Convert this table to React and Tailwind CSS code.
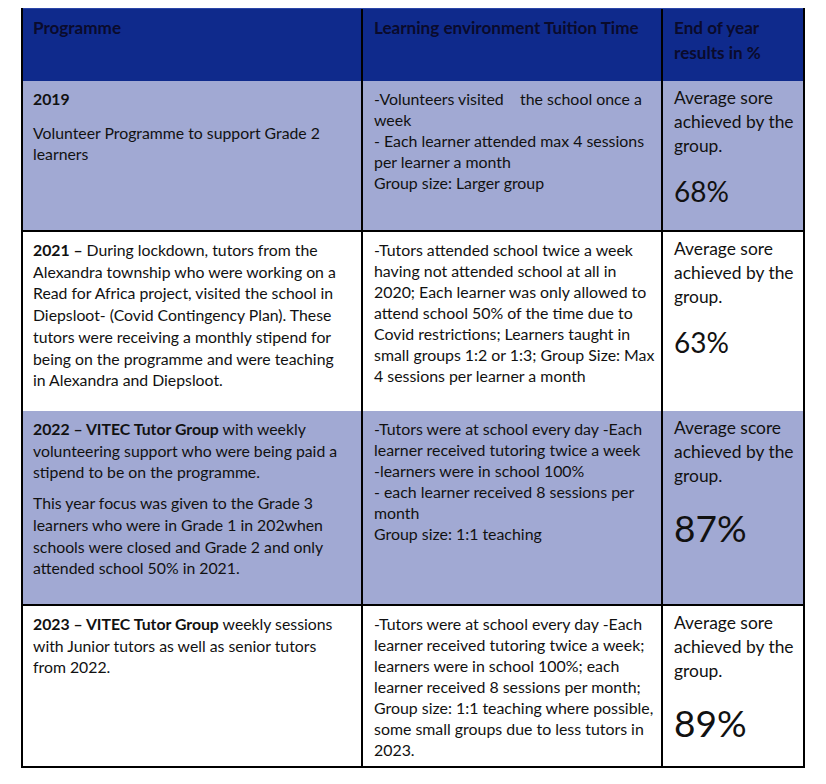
import React from "react";

const L = ({ children }) => <div className="whitespace-pre">{children}</div>;

function C1({ children }) {
  return (
    <div className="w-[340px] shrink-0 border-r-2 border-black pl-[10px] pt-[7px] text-[15.8px] leading-[21.7px] text-[#111]">
      {children}
    </div>
  );
}
function C2({ children }) {
  return (
    <div className="w-[300px] shrink-0 border-r-2 border-black pl-[11px] pt-[7px] text-[15.9px] leading-[21px] text-[#111]">
      {children}
    </div>
  );
}
function C3({ lines, pct, big }) {
  return (
    <div className="w-[140px] shrink-0 pl-[11px] pt-[5px] text-[17.4px] leading-[24px] text-[#111]">
      {lines.map((l, i) => (
        <L key={i}>{l}</L>
      ))}
      {big ? (
        <div className="mt-[19px] text-[37px] leading-[42px]">{pct}</div>
      ) : (
        <div className="mt-[17px] text-[28px] leading-[32px]">{pct}</div>
      )}
    </div>
  );
}

export default function App() {
  return (
    <div className="w-[826px] h-[784px] bg-white pt-[8px] pl-[21px]" style={{ fontFamily: "Lato, 'Liberation Sans', sans-serif" }}>
      <div className="w-[784px] border-l-2 border-r-2 border-black">
        {/* header */}
        <div className="flex h-[73px] bg-[#0f2a8c] border-t border-[#2a45a8] font-bold text-[17.1px] leading-[25px] text-[#0a0b2c]">
          <div className="w-[340px] shrink-0 border-r-2 border-black pl-[10px] pt-[6px]">Programme</div>
          <div className="w-[300px] shrink-0 border-r-2 border-black pl-[11px] pt-[6px]">Learning environment Tuition Time</div>
          <div className="w-[140px] shrink-0 pl-[11px] pt-[6px]">
            <L>End of year</L>
            <L>results in %</L>
          </div>
        </div>

        {/* row 1 */}
        <div className="flex h-[151px] bg-[#a1a9d3] border-b-2 border-black">
          <C1>
            <div className="mb-[12px] font-bold"><L>2019</L></div>
            <L>Volunteer Programme to support Grade 2</L>
            <L>learners</L>
          </C1>
          <C2>
            <L>{"-Volunteers visited    the school once a"}</L>
            <L>week</L>
            <L>- Each learner attended max 4 sessions</L>
            <L>per learner a month</L>
            <L>Group size: Larger group</L>
          </C2>
          <C3 lines={["Average sore", "achieved by the", "group."]} pct="68%" />
        </div>

        {/* row 2 */}
        <div className="flex h-[179px] bg-white">
          <C1>
            <L><span className="font-bold">2021 – </span>During lockdown, tutors from the</L>
            <L>Alexandra township who were working on a</L>
            <L>Read for Africa project, visited the school in</L>
            <L>Diepsloot- (Covid Contingency Plan). These</L>
            <L>tutors were receiving a monthly stipend for</L>
            <L>being on the programme and were teaching</L>
            <L>in Alexandra and Diepsloot.</L>
          </C1>
          <C2>
            <L>-Tutors attended school twice a week</L>
            <L>having not attended school at all in</L>
            <L>2020; Each learner was only allowed to</L>
            <L>attend school 50% of the time due to</L>
            <L>Covid restrictions; Learners taught in</L>
            <L>small groups 1:2 or 1:3; Group Size: Max</L>
            <L>4 sessions per learner a month</L>
          </C2>
          <C3 lines={["Average sore", "achieved by the", "group."]} pct="63%" />
        </div>

        {/* row 3 */}
        <div className="flex h-[195px] bg-[#a1a9d3] border-b-2 border-black">
          <C1>
            <div className="mb-[9px]">
              <L><span className="font-bold">2022 – VITEC Tutor Group</span> with weekly</L>
              <L>volunteering support who were being paid a</L>
              <L>stipend to be on the programme.</L>
            </div>
            <L>This year focus was given to the Grade 3</L>
            <L>learners who were in Grade 1 in 202when</L>
            <L>schools were closed and Grade 2 and only</L>
            <L>attended school 50% in 2021.</L>
          </C1>
          <C2>
            <L>-Tutors were at school every day -Each</L>
            <L>learner received tutoring twice a week</L>
            <L>-learners were in school 100%</L>
            <L>- each learner received 8 sessions per</L>
            <L>month</L>
            <L>Group size: 1:1 teaching</L>
          </C2>
          <C3 lines={["Average score", "achieved by the", "group."]} pct="87%" big />
        </div>

        {/* row 4 */}
        <div className="flex h-[162px] bg-white border-b-2 border-black">
          <C1>
            <L><span className="font-bold">2023 – VITEC Tutor Group</span> weekly sessions</L>
            <L>with Junior tutors as well as senior tutors</L>
            <L>from 2022.</L>
          </C1>
          <C2>
            <L>-Tutors were at school every day -Each</L>
            <L>learner received tutoring twice a week;</L>
            <L>learners were in school 100%; each</L>
            <L>learner received 8 sessions per month;</L>
            <L>Group size: 1:1 teaching where possible,</L>
            <L>some small groups due to less tutors in</L>
            <L>2023.</L>
          </C2>
          <C3 lines={["Average sore", "achieved by the", "group."]} pct="89%" big />
        </div>
      </div>
    </div>
  );
}
